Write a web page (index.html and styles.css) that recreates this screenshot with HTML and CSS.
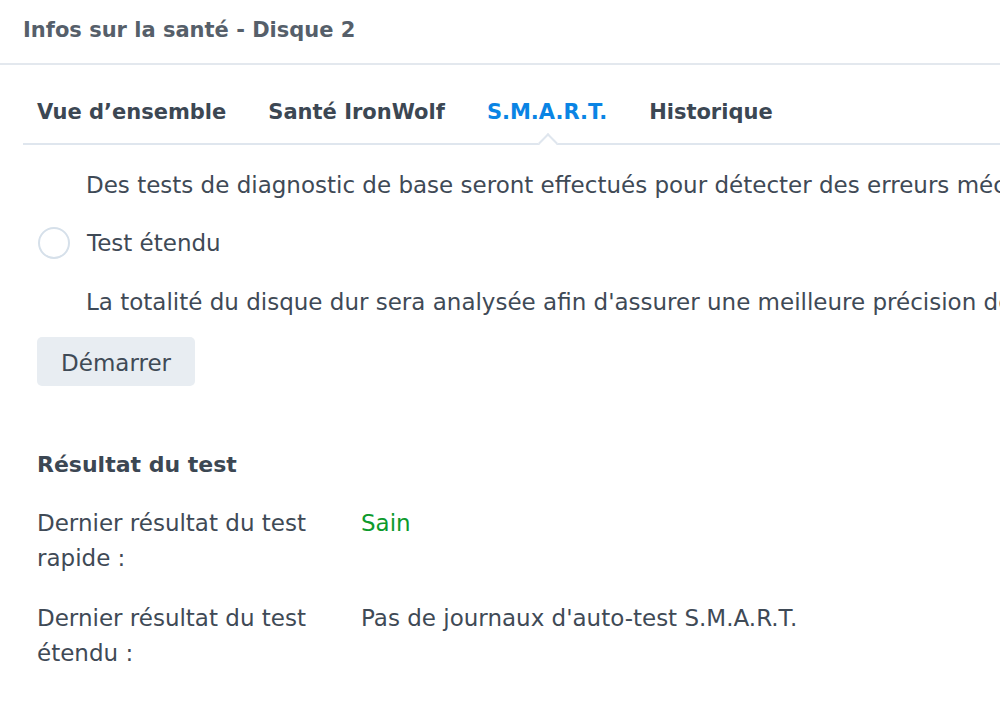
FILE: index.html
```html
<!DOCTYPE html>
<html lang="fr">
<head>
<meta charset="utf-8">
<link rel="stylesheet" href="styles.css">
</head>
<body>
<div class="window">
  <div class="header">Infos sur la santé - Disque 2</div>
  <div class="body">
    <div class="tabs">
      <div class="tab">Vue d’ensemble</div>
      <div class="tab">Santé IronWolf</div>
      <div class="tab active">S.M.A.R.T.</div>
      <div class="tab">Historique</div>
    </div>
    <div class="content">
      <p class="desc">Des tests de diagnostic de base seront effectués pour détecter des erreurs mécaniques et électriques.</p>
      <label class="radio-row"><span class="radio"></span><span>Test étendu</span></label>
      <p class="desc">La totalité du disque dur sera analysée afin d'assurer une meilleure précision des résultats.</p>
      <button class="btn">Démarrer</button>
      <h3 class="section">Résultat du test</h3>
      <div class="row">
        <div class="label">Dernier résultat du test rapide :</div>
        <div class="value ok">Sain</div>
      </div>
      <div class="row second">
        <div class="label">Dernier résultat du test étendu :</div>
        <div class="value">Pas de journaux d'auto-test S.M.A.R.T.</div>
      </div>
    </div>
  </div>
</div>
</body>
</html>
```
FILE: styles.css
```css
html, body {
  margin: 0;
  padding: 0;
  background: #ffffff;
  overflow: hidden;
}
body {
  font-family: "DejaVu Sans", Verdana, sans-serif;
  color: #3f4a56;
  width: 1000px;
  height: 710px;
}
.window {
  width: 1000px;
  overflow: hidden;
}
.header {
  height: 65px;
  box-sizing: border-box;
  padding: 17px 0 0 23px;
  font-size: 21px;
  line-height: 26px;
  font-weight: bold;
  color: #565f6a;
  border-bottom: 2px solid #e3e8ee;
  white-space: nowrap;
}
.body {
  padding-left: 23px;
}
.tabs {
  display: flex;
  gap: 42px;
  padding: 34px 0 0 14px;
  height: 80px;
  box-sizing: border-box;
  border-bottom: 2px solid #dfe6ee;
}
.tab {
  font-size: 21px;
  line-height: 26px;
  font-weight: bold;
  color: #3c4753;
  white-space: nowrap;
  position: relative;
}
.tab.active {
  color: #0a84e4;
}
.tab.active::after {
  content: "";
  position: absolute;
  left: 50%;
  top: 37px;
  width: 14px;
  height: 14px;
  margin-left: -6px;
  box-sizing: border-box;
  background: #fff;
  border-left: 2px solid #dfe6ee;
  border-top: 2px solid #dfe6ee;
  transform: rotate(45deg);
}
.content {
  padding-left: 14px;
}
.desc {
  margin: 0;
  padding-left: 49px;
  font-size: 23px;
  white-space: nowrap;
  line-height: 34px;
}
.content > .desc:first-child {
  margin-top: 23px;
}
.radio-row {
  display: flex;
  align-items: center;
  gap: 17px;
  height: 34px;
  margin: 24px 0 25px 1px;
  font-size: 23px;
}
.radio {
  width: 32px;
  height: 32px;
  border: 2px solid #d6e0ea;
  border-radius: 50%;
  box-sizing: border-box;
  background: #fff;
}
.btn {
  display: block;
  margin-top: 18px;
  width: 158px;
  height: 49px;
  border: none;
  border-radius: 5px;
  background: #e8edf2;
  font-family: "DejaVu Sans", Verdana, sans-serif;
  font-size: 23px;
  color: #3f4a56;
  padding: 2px 0 0 0;
}
.section {
  margin: 62px 0 0 0;
  font-size: 22px;
  font-weight: bold;
  color: #3c4753;
  line-height: 34px;
}
.row {
  display: flex;
  margin-top: 24px;
  font-size: 23px;
  line-height: 35px;
}
.row.second {
  margin-top: 25px;
}
.label {
  width: 300px;
  flex: none;
}
.value {
  margin-left: 24px;
  white-space: nowrap;
}
.value.ok {
  color: #0c9a2c;
}
```
